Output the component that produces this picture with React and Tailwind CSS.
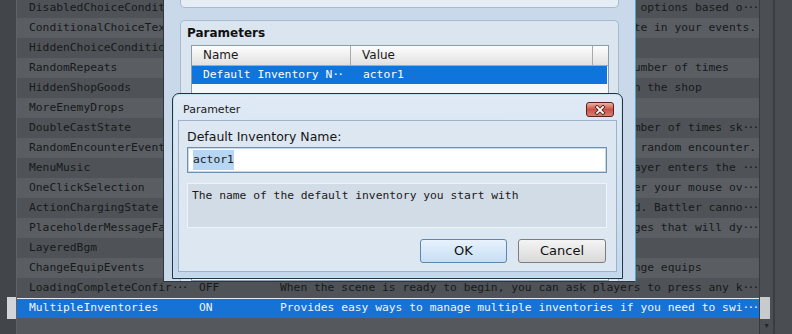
import React from "react";

const ROWS = [
  { name: "DisabledChoiceConditions", on: true, pre: "Allows you to disable choices in your show choices", at: 52, tail: " options based o", more: true },
  { name: "ConditionalChoiceText", on: true, pre: "Allows you to change choice text with a", at: 46, tail: "template in your events." },
  { name: "HiddenChoiceConditions", on: true, pre: "Allows you to hide choices based on conditions", at: 0, tail: "" },
  { name: "RandomRepeats", on: true, pre: "Allows you to set a random range for the", at: 51, tail: "number of times" },
  { name: "HiddenShopGoods", on: true, pre: "Allows you to hide goods or disable them", at: 51, tail: "in the shop" },
  { name: "MoreEnemyDrops", on: true, pre: "Allows you to set more drops for enemies", at: 0, tail: "" },
  { name: "DoubleCastState", on: true, pre: "Allows you to create states that change the", at: 50, tail: "number of times sk", more: true },
  { name: "RandomEncounterEvents", on: true, pre: "Allows you to run a common event on", at: 51, tail: "a random encounter." },
  { name: "MenuMusic", on: true, pre: "Allows you to change the music when the", at: 50, tail: "player enters the ", more: true },
  { name: "OneClickSelection", on: true, pre: "Allows you to select things when you", at: 49, tail: "hover your mouse ov", more: true },
  { name: "ActionChargingState", on: true, pre: "Allows actions to take time to be charg", at: 51, tail: "ed. Battler canno", more: true },
  { name: "PlaceholderMessageFaces", on: true, pre: "Allows you to use placeholders in", at: 47, tail: "messages that will dy", more: true },
  { name: "LayeredBgm", on: true, pre: "Allows you to play multiple BGM layers", at: 0, tail: "" },
  { name: "ChangeEquipEvents", on: true, pre: "Allows you to run common events when you", at: 49, tail: "change equips" },
  { name: "LoadingCompleteConfir", on: false, cut: true, pre: "When the scene is ready to begin, you can ask players to press any k", at: 0, tail: "", more: true },
  { name: "MultipleInventories", on: true, pre: "Provides easy ways to manage multiple inventories if you need to swi", at: 0, tail: "", more: true },
];

const Dots = ({ n = 3 }) => <span className="tracking-[-1.8px]">{"·".repeat(n)}</span>;

const descOf = (r) => (r.at ? (r.pre + " ".repeat(80)).slice(0, r.at) + r.tail : r.pre);

function ListRow({ row, index, selected }) {
  const tone = selected
    ? "border-t border-[#e8ecf0] bg-[#1672d4] text-[#eef4fb]"
    : index % 2
    ? "bg-[#5a5e62]"
    : "bg-[#4f5357]";
  return (
    <div className={`flex h-[20px] items-center whitespace-pre ${tone}`}>
      <div className="w-[171px] shrink-0 overflow-hidden pl-[12px]">
        {row.name}
        {row.cut && <Dots />}
      </div>
      <div className="w-[80px] shrink-0 pl-[11px]">{row.on ? "ON" : "OFF"}</div>
      <div className="min-w-0 flex-1 overflow-hidden pl-[12px]">
        {descOf(row)}
        {row.more && <Dots />}
      </div>
    </div>
  );
}

function PluginDialog() {
  return (
    <div className="absolute left-[163px] top-[-12px] flex h-[294px] w-[473px] flex-col border border-[#2c3742] border-r-[#48a9c9] bg-[#c9d9ea]">
      <div className="mx-[16px] h-[19px] shrink-0 rounded-b-[5px] border border-t-0 border-[#a6bbd0] bg-[#e6edf5]" />
      <div className="mx-[16px] mt-[12px] flex flex-1 flex-col rounded-t-[5px] border border-b-0 border-[#a6bbd0] bg-[#dbe5ef]">
        <div className="pl-[6px] pt-[4px] text-[12px] leading-[16px] font-bold text-[#111]">Parameters</div>
        <div className="ml-[10px] mr-[9px] mt-[4px] flex-1 border border-[#8b9bab] bg-[#f6f7f9]">
          <div className="flex h-[20px] border-b border-[#a9a9a9] bg-gradient-to-b from-[#fdfdfd] to-[#e1e1e1] text-[12px] leading-[19px] text-[#1a1a1a]">
            <div className="w-[159px] shrink-0 border-r border-[#a9a9a9] pl-[11px]">Name</div>
            <div className="flex-1 border-r border-[#a9a9a9] pl-[11px]">Value</div>
            <div className="w-[15px] shrink-0" />
          </div>
          <div className="mr-[1px] flex h-[18px] items-center whitespace-pre bg-[#0f74dc] font-['DejaVu_Sans_Mono',monospace] text-[11.3px] text-white">
            <div className="w-[160px] shrink-0 pl-[11px]">
              Default Inventory N<Dots n={2} />
            </div>
            <div className="pl-[11px]">actor1</div>
          </div>
        </div>
      </div>
    </div>
  );
}

function CloseButton() {
  return (
    <div className="flex h-[15px] w-[28px] items-center justify-center rounded-[3px] border border-[#5b211b] bg-gradient-to-b from-[#ebb0a4] via-[#c95247] to-[#d97e70]">
      <svg width="12" height="10" viewBox="0 0 12 10">
        <path d="M3 2 L9 8 M9 2 L3 8" stroke="#4a1a16" strokeWidth="3.4" strokeLinecap="square" fill="none" />
        <path d="M3 2 L9 8 M9 2 L3 8" stroke="#ffffff" strokeWidth="1.8" strokeLinecap="square" fill="none" />
      </svg>
    </div>
  );
}

function ParameterDialog() {
  return (
    <div className="absolute left-[172px] top-[93px] flex h-[186px] w-[451px] flex-col rounded-t-[7px] border border-[#26323e] bg-gradient-to-b from-[#e0eaf6] to-[#c4d7ec] shadow-[inset_0_0_0_1px_#bfe4f4]">
      <div className="flex h-[26px] shrink-0 items-start justify-between pl-[10px] pr-[8px] pt-[8px]">
        <span className="text-[11px] leading-[16px] text-[#1b1b1b]">Parameter</span>
        <CloseButton />
      </div>
      <div className="mx-[5px] mb-[6px] flex flex-1 flex-col border border-[#9db2c8] bg-[#dde7f1] pl-[8px] pr-[9px]">
        <div className="pt-[8px] text-[12.5px] leading-[16px] text-[#151515]">Default Inventory Name:</div>
        <div className="mt-[2px] flex h-[26px] items-center border border-[#6f90b2] bg-white pl-[5px] shadow-[inset_0_0_0_1px_#c9d8e8] font-['DejaVu_Sans_Mono',monospace] text-[11.3px] text-[#1a1a1a]">
          <span className="bg-[#b6d6f3] leading-[20px]">actor1</span>
        </div>
        <div className="mt-[10px] h-[45px] border border-[#eef3f8] bg-[#d2dce6] pl-[4px] pt-[4px] font-['DejaVu_Sans_Mono',monospace] text-[11.3px] leading-[16px] text-[#1a1a1a]">
          The name of the default inventory you start with
        </div>
        <div className="mt-[11px] flex justify-end gap-[11px] pr-[1px] text-[13px]">
          <button className="h-[24px] w-[87px] rounded-[3px] border border-[#5f86ad] bg-gradient-to-b from-[#e8f2fc] to-[#c6dff6] text-[#111]">
            OK
          </button>
          <button className="h-[24px] w-[88px] rounded-[3px] border border-[#7d7d7d] bg-gradient-to-b from-[#f4f4f4] to-[#d9d9d9] text-[#111]">
            Cancel
          </button>
        </div>
      </div>
    </div>
  );
}

export default function App() {
  return (
    <div className="relative h-[334px] w-[792px] overflow-hidden bg-[#54585c] font-['DejaVu_Sans',sans-serif]">
      <div className="flex h-full font-['DejaVu_Sans_Mono',monospace] text-[11.3px] text-[#17191b]">
        <div className="flex w-[17px] shrink-0 flex-col border-r border-[#5f6367] bg-[#42464a]">
          <div className="-mt-[2px] h-[299px] shrink-0" />
          <div className="ml-[7px] h-[22px] bg-[#d2d6da]" />
        </div>
        <div className="-mt-[2px] w-[742px] shrink-0 bg-[#55595d]">
          {ROWS.map((r, i) => (
            <ListRow key={r.name} row={r} index={i} selected={i === ROWS.length - 1} />
          ))}
        </div>
        <div className="flex w-[14px] shrink-0 flex-col border-l border-[#383c40] bg-[#4b4f53]">
          <div className="flex-1" />
          <div className="mr-[3px] h-[22px] bg-[#c8cacc]" />
          <div className="flex h-[15px] items-center justify-center text-[7px] text-[#25282b]">▼</div>
        </div>
        <div className="w-[19px] shrink-0 border-l-2 border-[#3a3e42] bg-[#4a4e52]" />
      </div>
      <PluginDialog />
      <ParameterDialog />
    </div>
  );
}
